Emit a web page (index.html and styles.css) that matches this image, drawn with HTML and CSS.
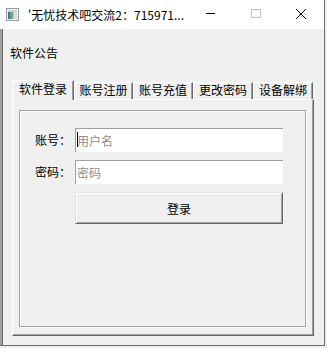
FILE: index.html
```html
<!DOCTYPE html>
<html lang="zh-CN">
<head>
<meta charset="utf-8">
<title>无忧技术吧交流2</title>
<link rel="stylesheet" href="styles.css">
</head>
<body>
<div class="window">
  <div class="titlebar">
    <svg class="app-icon" width="13" height="13" viewBox="0 0 13 13">
      <defs>
        <linearGradient id="ig" x1="0" y1="0" x2="1" y2="0">
          <stop offset="0" stop-color="#2f6f86"/>
          <stop offset="1" stop-color="#9cc79a"/>
        </linearGradient>
      </defs>
      <rect x="0.5" y="0.5" width="12" height="12" fill="#f2f2f2" stroke="#9a9a9a"/>
      <rect x="2" y="2" width="9" height="2" fill="#c9d3dc"/>
      <rect x="2" y="4" width="6" height="7" fill="url(#ig)"/>
      <rect x="9" y="4" width="2" height="7" fill="#d6d6d6"/>
    </svg>
    <span class="title">'无忧技术吧交流2：715971...</span>
    <div class="controls">
      <span class="ctl"><svg width="46" height="29" viewBox="0 0 46 29"><rect x="20" y="13" width="9" height="1" fill="#000"/></svg></span>
      <span class="ctl"><svg width="46" height="29" viewBox="0 0 46 29"><rect x="19.5" y="9.5" width="9" height="8" fill="none" stroke="#c4c4c4"/></svg></span>
      <span class="ctl"><svg width="46" height="29" viewBox="0 0 46 29"><path d="M18 9 L28 19 M28 9 L18 19" stroke="#000" stroke-width="1" fill="none"/></svg></span>
    </div>
  </div>
  <div class="client">
    <div class="notice">软件公告</div>
    <div class="tabctl">
      <div class="tabs">
        <div class="tab active w62">软件登录</div>
        <div class="tab w59">账号注册</div>
        <div class="tab w60">账号充值</div>
        <div class="tab w60">更改密码</div>
        <div class="tab w60">设备解绑</div>
      </div>
      <div class="panel">
        <div class="group">
          <div class="row">
            <span class="lbl">账号：</span>
            <div class="field"><span class="caret"></span><span class="ph">用户名</span></div>
          </div>
          <div class="row">
            <span class="lbl">密码：</span>
            <div class="field"><span class="ph">密码</span></div>
          </div>
          <div class="row">
            <button class="btn" type="button">登录</button>
          </div>
        </div>
      </div>
    </div>
  </div>
</div>
</body>
</html>
```
FILE: styles.css
```css
* { box-sizing: border-box; }
html, body { margin: 0; padding: 0; }
body {
  width: 327px;
  height: 348px;
  overflow: hidden;
  background: #f0f0f0;
  font-family: "Noto Sans CJK SC", "Microsoft YaHei", sans-serif;
  font-size: 12px;
  color: #000;
}
.window {
  width: 325px;
  height: 346px;
  border-right: 1px solid #6d6d6d;
  border-bottom: 1px solid #6d6d6d;
  display: flex;
  flex-direction: column;
}
.titlebar {
  flex: none;
  height: 29px;
  background: #fff;
  display: flex;
  align-items: center;
}
.app-icon { flex: none; margin-left: 6px; display: block; }
.title {
  flex: 1;
  margin-left: 9px;
  line-height: 16px;
  white-space: nowrap;
  overflow: hidden;
}
.controls { display: flex; flex: none; height: 29px; }
.ctl { display: block; width: 46px; height: 29px; }
.ctl svg { display: block; }

.client {
  flex: 1;
  border-left: 2px solid #a0a0a0;
  box-shadow: inset 1px 0 #6d6d6d;
  display: flex;
  flex-direction: column;
}
.notice {
  margin: 16px 0 0 8px;
  line-height: 16px;
}
.tabctl {
  margin: 19px 0 0 10px;
  width: 302px;
}
.tabs {
  display: flex;
  align-items: flex-end;
  height: 19px;
}
.tab {
  height: 17px;
  border-top: 1px solid #fff;
  border-left: 1px solid #fff;
  border-right: 1px solid #696969;
  box-shadow: inset -1px 0 #a0a0a0;
  text-align: center;
  line-height: 14px;
  white-space: nowrap;
  background: #f0f0f0;
}
.tab.active {
  height: 20px;
  margin-bottom: -1px;
  line-height: 16px;
  position: relative;
  z-index: 1;
}
.w62 { width: 62px; }
.w59 { width: 59px; }
.w60 { width: 60px; }

.panel {
  height: 237px;
  border-top: 1px solid #fff;
  border-left: 1px solid #fff;
  border-right: 1px solid #696969;
  border-bottom: 1px solid #696969;
  box-shadow: inset -1px -1px #a0a0a0;
  padding: 10px 0 0 6px;
}
.group {
  width: 287px;
  height: 217px;
  border: 1px solid #a0a0a0;
  box-shadow: inset 1px 1px #fff, 1px 1px #fff;
  padding: 17px 0 0 15px;
  display: flex;
  flex-direction: column;
  gap: 8px;
}
.row { display: flex; align-items: center; }
.lbl { width: 40px; line-height: 16px; }
.field {
  position: relative;
  width: 208px;
  height: 24px;
  background: #fff;
  border-top: 1px solid #a0a0a0;
  border-left: 1px solid #a0a0a0;
  padding-left: 1px;
  display: flex;
  align-items: center;
  color: #8d8d8d;
  line-height: 16px;
}
.caret {
  position: absolute;
  left: 1px;
  top: 3px;
  width: 1px;
  height: 15px;
  background: #000;
}
.btn {
  margin: 0 0 0 40px;
  width: 208px;
  height: 32px;
  padding: 0;
  background: #f0f0f0;
  font: inherit;
  color: #000;
  border-top: 1px solid #e3e3e3;
  border-left: 1px solid #e3e3e3;
  border-right: 1px solid #696969;
  border-bottom: 1px solid #696969;
  box-shadow: inset 1px 1px #fff, inset -1px -1px #a0a0a0;
}
```
